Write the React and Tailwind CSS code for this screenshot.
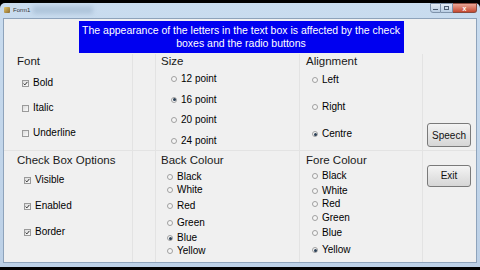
import React from "react";

const fontItems = [
  { label: "Bold", checked: true },
  { label: "Italic", checked: false },
  { label: "Underline", checked: false },
];

const sizeItems = [
  { label: "12 point", checked: false },
  { label: "16 point", checked: true },
  { label: "20 point", checked: false },
  { label: "24 point", checked: false },
];

const alignItems = [
  { label: "Left", checked: false },
  { label: "Right", checked: false },
  { label: "Centre", checked: true },
];

const optionItems = [
  { label: "Visible", checked: true },
  { label: "Enabled", checked: true },
  { label: "Border", checked: true },
];

// irregular spacing, as laid out in the designer
const backItems = [
  { label: "Black", checked: false, cls: "mt-[3px]" },
  { label: "White", checked: false, cls: "mt-[1px]" },
  { label: "Red", checked: false, cls: "mt-[4px]" },
  { label: "Green", checked: false, cls: "mt-[5px]" },
  { label: "Blue", checked: true, cls: "mt-[3px]" },
  { label: "Yellow", checked: false, cls: "mt-[1px]" },
];

const foreItems = [
  { label: "Black", checked: false, cls: "mt-[2px]" },
  { label: "White", checked: false, cls: "mt-[3px]" },
  { label: "Red", checked: false, cls: "mt-[1px]" },
  { label: "Green", checked: false, cls: "mt-[2px]" },
  { label: "Blue", checked: false, cls: "mt-[3px]" },
  { label: "Yellow", checked: true, cls: "mt-[5px]" },
];

const CheckBox = ({ checked }) => (
  <span className="w-[7px] h-[7px] border border-[#9a9a9a] bg-gradient-to-br from-[#dcdcdc] to-[#fafafa] flex items-center justify-center">
    {checked && (
      <svg width="5" height="5" viewBox="0 0 5 5">
        <path d="M0.6 2.6 L1.9 3.9 L4.4 0.9" stroke="#333" strokeWidth="1" fill="none" />
      </svg>
    )}
  </span>
);

const Radio = ({ checked }) => (
  <span className="w-[6px] h-[6px] rounded-full border border-[#a0a0a0] bg-[#f6f6f6] flex items-center justify-center">
    {checked && <span className="w-[3px] h-[3px] rounded-full bg-[#2a3f55]" />}
  </span>
);

const Row = ({ item, kind, cls = "" }) => (
  <div className={`flex items-center h-[12px] ${cls}`}>
    {kind === "check" ? <CheckBox checked={item.checked} /> : <Radio checked={item.checked} />}
    <span className="ml-[4px] text-[10px] leading-none text-black">{item.label}</span>
  </div>
);

const Header = ({ children }) => (
  <div className="h-[14px] flex items-center text-[11.5px] leading-none text-[#1a1a1a]">{children}</div>
);

export default function App() {
  return (
    <div className="w-[480px] h-[270px] bg-black pt-[3px] overflow-hidden" style={{ fontFamily: '"Liberation Sans", Arial, sans-serif' }}>
      <div className="h-[264px] bg-gradient-to-b from-[#c9dcef] to-[#bcd0e6] rounded-t-[5px] px-[3px] pb-[4px] flex flex-col">
        {/* title bar */}
        <div className="h-[14px] flex items-center relative">
          <div className="absolute left-[30px] top-[3px] w-[60px] h-[8px] bg-[#9fb7cf] opacity-60 blur-[2px]" />
          <span className="w-[6px] h-[6px] ml-[1px] bg-gradient-to-br from-[#e6c76a] to-[#8a6a30] rounded-[1px]" />
          <span className="ml-[3px] text-[6px] leading-none text-[#333] relative">Form1</span>
          <div className="ml-auto flex items-start self-start">
            <div className="w-[11px] h-[10px] border border-[#7f93ab] rounded-bl-[3px] bg-gradient-to-b from-[#e4edf7] to-[#b9cde3] flex items-end justify-center pb-[2px]">
              <span className="w-[5px] h-[1px] bg-[#4c5d72]" />
            </div>
            <div className="w-[12px] h-[10px] border-y border-r border-[#7f93ab] bg-gradient-to-b from-[#e4edf7] to-[#b9cde3] flex items-center justify-center">
              <span className="w-[5px] h-[4px] border border-[#4c5d72]" />
            </div>
            <div className="w-[24px] h-[10px] border-y border-r border-[#8a4a3e] rounded-br-[3px] bg-gradient-to-b from-[#e9a595] to-[#c5472f] flex items-center justify-center text-white text-[7px] font-bold leading-none">
              x
            </div>
          </div>
        </div>

        {/* client area */}
        <div className="flex-1 mt-[1px] bg-[#f0f0f0] border border-[#8ea3bb] flex flex-col">
          <div className="h-[35px] flex justify-center pt-[2px]">
            <div className="ml-[2px] w-[325px] h-[32px] bg-[#0000f0] text-white text-[10.5px] leading-[13px] text-center pt-[3px]">
              The appearance of the letters in the text box is affected by the check boxes and the radio buttons
            </div>
          </div>

          {/* top row */}
          <div className="h-[97px] flex pl-[8px] border-b border-[#e3e3e3]">
            <div className="w-[121px] pl-[5px] pt-[1px] border-r border-[#e3e3e3]">
              <Header>Font</Header>
              <div className="mt-[8px] ml-[5px] flex flex-col gap-[13px]">
                {fontItems.map((it) => (
                  <Row key={it.label} item={it} kind="check" />
                ))}
              </div>
            </div>
            <div className="ml-[22px] w-[145px] pl-[5px] pt-[1px] border-x border-[#e3e3e3]">
              <Header>Size</Header>
              <div className="mt-[4px] ml-[10px] flex flex-col gap-[8.7px]">
                {sizeItems.map((it) => (
                  <Row key={it.label} item={it} kind="radio" />
                ))}
              </div>
            </div>
            <div className="ml-[3px] w-[120px] pl-[3px] pt-[1px] border-r border-[#e3e3e3]">
              <Header>Alignment</Header>
              <div className="mt-[5px] ml-[6px] flex flex-col gap-[15px]">
                {alignItems.map((it) => (
                  <Row key={it.label} item={it} kind="radio" />
                ))}
              </div>
            </div>
            <div className="ml-[4px] flex flex-col justify-end pb-[3px]">
              <button className="w-[44px] h-[24px] border border-[#7a7a7a] rounded-[3px] bg-gradient-to-b from-[#f4f4f4] to-[#d6d6d6] text-[10px] text-[#111]">
                Speech
              </button>
            </div>
          </div>

          {/* bottom row */}
          <div className="flex-1 flex pl-[8px]">
            <div className="w-[121px] pl-[5px] pt-[3px] border-r border-[#e3e3e3]">
              <Header>Check Box Options</Header>
              <div className="mt-[6px] ml-[7px] flex flex-col gap-[14px]">
                {optionItems.map((it) => (
                  <Row key={it.label} item={it} kind="check" />
                ))}
              </div>
            </div>
            <div className="ml-[22px] w-[145px] pl-[5px] pt-[3px] border-x border-[#e3e3e3]">
              <Header>Back Colour</Header>
              <div className="ml-[6px] flex flex-col">
                {backItems.map((it) => (
                  <Row key={it.label} item={it} kind="radio" cls={it.cls} />
                ))}
              </div>
            </div>
            <div className="ml-[3px] w-[120px] pl-[3px] pt-[3px] border-r border-[#e3e3e3]">
              <Header>Fore Colour</Header>
              <div className="ml-[6px] flex flex-col">
                {foreItems.map((it) => (
                  <Row key={it.label} item={it} kind="radio" cls={it.cls} />
                ))}
              </div>
            </div>
            <div className="ml-[4px] pt-[11px]">
              <button className="w-[44px] h-[22px] border border-[#7a7a7a] rounded-[3px] bg-gradient-to-b from-[#f4f4f4] to-[#d6d6d6] text-[10px] text-[#111]">
                Exit
              </button>
            </div>
          </div>
        </div>
      </div>
    </div>
  );
}
